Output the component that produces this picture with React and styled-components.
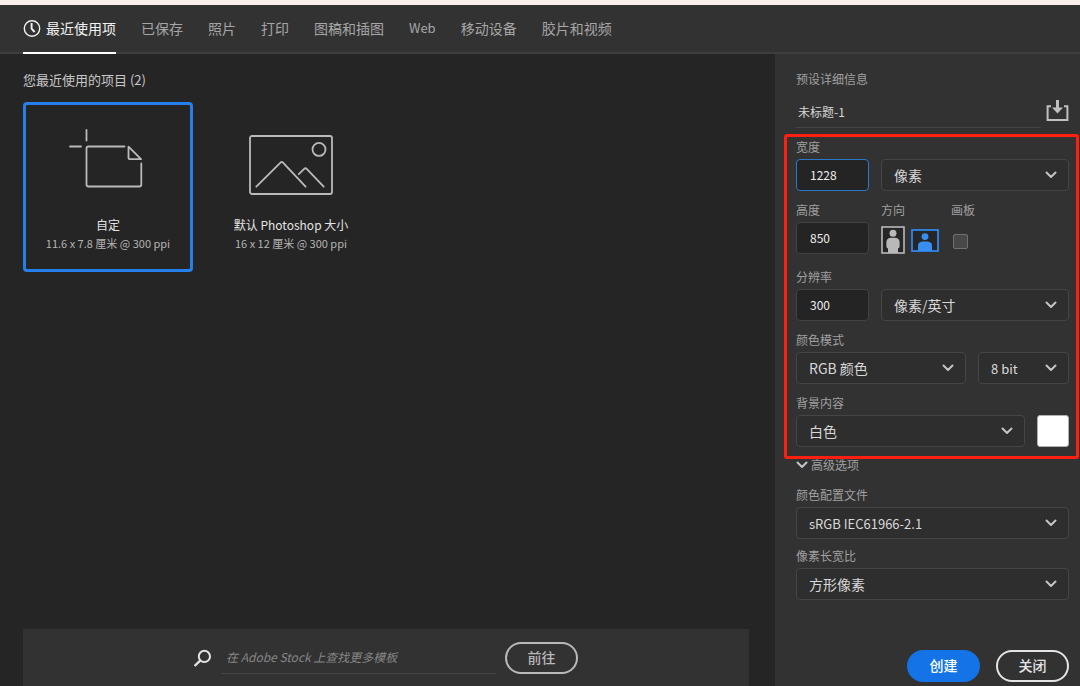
import React, { useState } from 'react'
import styled, { createGlobalStyle } from 'styled-components'

const tabs = ['最近使用项', '已保存', '照片', '打印', '图稿和插图', 'Web', '移动设备', '胶片和视频']

function Dropdown({ id, label, options, latin }) {
    return (
        <SelectWrap $latin={latin}>
            <select id={id} aria-label={label}>
                {options.map((option) => <option key={option}>{option}</option>)}
            </select>
            <Chevron />
        </SelectWrap>
    )
}

function Chevron() {
    return (
        <svg width="12" height="8" viewBox="0 0 12 8" fill="none" stroke="#c4c4c4" strokeWidth="2" strokeLinecap="round" strokeLinejoin="round" aria-hidden="true">
            <path d="M1.5 1.5L6 6L10.5 1.5" />
        </svg>
    )
}

function ClockIcon() {
    return (
        <svg width="18" height="18" viewBox="0 0 18 18" fill="none" stroke="#f0f0f0" aria-hidden="true">
            <circle cx="9" cy="9.5" r="7.7" strokeWidth="1.4" />
            <path d="M8.6 4V9.6L11.6 13" strokeWidth="1.9" />
        </svg>
    )
}

function DocumentArt() {
    return (
        <svg width="78" height="74" viewBox="0 0 78 74" fill="none" stroke="#bababa" strokeWidth="1.8" strokeLinecap="round" strokeLinejoin="round" aria-hidden="true">
            <path d="M17.5 2V12.5" />
            <path d="M1 18.5H12" />
            <path d="M55.5 18.5H19.5Q17.5 18.5 17.5 20.5V56.5Q17.5 58.5 19.5 58.5H70.3Q72.3 58.5 72.3 56.5V35.5" />
            <path d="M59.5 18.6V29.5Q59.5 31.2 61.2 31.2H72Z" />
        </svg>
    )
}

function ImageArt() {
    return (
        <svg width="84" height="60" viewBox="0 0 84 60" fill="none" stroke="#bababa" strokeWidth="1.8" strokeLinecap="round" strokeLinejoin="round" aria-hidden="true">
            <rect x="1" y="1" width="82" height="58" rx="2" />
            <circle cx="70" cy="14.4" r="6.5" />
            <path d="M7.3 51.7L31.5 27.6Q32.8 26.3 34 27.6L56.6 51.7" />
            <path d="M49.8 39.2L55.2 33.8Q56.5 32.6 57.7 33.8L74.7 51.7" />
        </svg>
    )
}

function SaveIcon() {
    return (
        <svg width="23" height="23" viewBox="0 0 23 23" fill="none" stroke="#c0c0c0" strokeWidth="2" aria-hidden="true">
            <path d="M5 7.2H1.6V21H21.4V7.2H18" />
            <path d="M11.5 1V10" strokeWidth="3" />
            <path d="M6 8.6H17L11.5 14.4Z" fill="#c0c0c0" stroke="none" />
        </svg>
    )
}

function PortraitIcon() {
    return (
        <svg width="24" height="28" viewBox="0 0 24 28" aria-hidden="true">
            <rect x="1" y="1" width="22" height="26" fill="#262626" stroke="#b9b9b9" strokeWidth="1.6" />
            <circle cx="12" cy="7.2" r="3.5" fill="#b9b9b9" />
            <path d="M9.5 11.8H14.5Q18.6 12.4 18.6 16.5V20.5Q18.6 22 17 22.4V27H7V22.4Q5.4 22 5.4 20.5V16.5Q5.4 12.4 9.5 11.8Z" fill="#b9b9b9" />
        </svg>
    )
}

function LandscapeIcon() {
    return (
        <svg width="28" height="23" viewBox="0 0 28 23" aria-hidden="true">
            <rect x="1" y="1" width="26" height="21" fill="#262626" stroke="#2f86ea" strokeWidth="1.8" />
            <circle cx="14" cy="7.6" r="3.4" fill="#378ef0" />
            <path d="M11.5 12.6H16.5Q21 13 21 16.5V22H7V16.5Q7 13 11.5 12.6Z" fill="#378ef0" />
        </svg>
    )
}

function SearchIcon() {
    return (
        <svg width="18" height="18" viewBox="0 0 18 18" fill="none" stroke="#e2e2e2" aria-hidden="true">
            <circle cx="10.4" cy="7.4" r="5.6" strokeWidth="2" />
            <path d="M6.4 11.4L0.6 17" strokeWidth="2.4" />
        </svg>
    )
}

function App() {
    const [activeTab, setActiveTab] = useState(tabs[0])
    const [orientation, setOrientation] = useState('landscape')

    return (
        <Page>
            <GlobalStyle />
            <Header>
                {tabs.map((tab) => (
                    <Tab key={tab} $active={tab === activeTab} $latin={tab === 'Web'} onClick={() => setActiveTab(tab)}>
                        {tab === tabs[0] && <ClockIcon />}
                        {tab}
                    </Tab>
                ))}
            </Header>
            <Body>
                <Main>
                    <Title>您最近使用的项目 (2)</Title>
                    <Presets>
                        <Preset $selected>
                            <Preview><DocumentArt /></Preview>
                            <PresetName>自定</PresetName>
                            <PresetSize>11.6 x 7.8 厘米 @ 300 ppi</PresetSize>
                        </Preset>
                        <Preset>
                            <Preview><ImageArt /></Preview>
                            <PresetName>默认 Photoshop 大小</PresetName>
                            <PresetSize>16 x 12 厘米 @ 300 ppi</PresetSize>
                        </Preset>
                    </Presets>
                    <StockBar>
                        <SearchIcon />
                        <StockInput aria-label="在 Adobe Stock 上查找更多模板" placeholder="在 Adobe Stock 上查找更多模板" />
                        <Button $tone="#b9b9b9">前往</Button>
                    </StockBar>
                </Main>

                <Aside>
                    <Label as="h2">预设详细信息</Label>
                    <NameRow>
                        <NameInput aria-label="名称" defaultValue="未标题-1" />
                        <IconButton aria-label="存储预设"><SaveIcon /></IconButton>
                    </NameRow>

                    <Highlight>
                        <Row $columns="73px 1fr">
                            <Field>
                                <Label htmlFor="width">宽度</Label>
                                <TextInput id="width" defaultValue="1228" $focused />
                            </Field>
                            <Field $end>
                                <Dropdown label="单位" options={['像素', '厘米', '英寸']} />
                            </Field>
                        </Row>
                        <Row $columns="73px 58px 1fr">
                            <Field>
                                <Label htmlFor="height">高度</Label>
                                <TextInput id="height" defaultValue="850" />
                            </Field>
                            <Field>
                                <Label as="span">方向</Label>
                                <Orientation>
                                    <IconButton aria-label="纵向" aria-pressed={orientation === 'portrait'} onClick={() => setOrientation('portrait')}>
                                        <PortraitIcon />
                                    </IconButton>
                                    <IconButton aria-label="横向" aria-pressed={orientation === 'landscape'} onClick={() => setOrientation('landscape')}>
                                        <LandscapeIcon />
                                    </IconButton>
                                </Orientation>
                            </Field>
                            <Field>
                                <Label htmlFor="artboard">画板</Label>
                                <Orientation>
                                    <Checkbox id="artboard" type="checkbox" />
                                </Orientation>
                            </Field>
                        </Row>
                        <Row $columns="73px 1fr">
                            <Field>
                                <Label htmlFor="resolution">分辨率</Label>
                                <TextInput id="resolution" defaultValue="300" />
                            </Field>
                            <Field $end>
                                <Dropdown label="分辨率单位" options={['像素/英寸', '像素/厘米']} />
                            </Field>
                        </Row>
                        <Row $columns="1fr 91px">
                            <Field>
                                <Label htmlFor="mode">颜色模式</Label>
                                <Dropdown id="mode" options={['RGB 颜色', 'CMYK 颜色', '灰度']} />
                            </Field>
                            <Field $end>
                                <Dropdown label="位深度" options={['8 bit', '16 bit', '32 bit']} latin />
                            </Field>
                        </Row>
                        <Row $columns="1fr 32px">
                            <Field>
                                <Label htmlFor="background">背景内容</Label>
                                <Dropdown id="background" options={['白色', '黑色', '透明']} />
                            </Field>
                            <Field $end>
                                <Swatch aria-label="背景颜色" />
                            </Field>
                        </Row>
                    </Highlight>

                    <Disclosure aria-expanded="true">
                        <Chevron />
                        高级选项
                    </Disclosure>
                    <Advanced>
                        <Field>
                            <Label htmlFor="profile">颜色配置文件</Label>
                            <Dropdown id="profile" options={['sRGB IEC61966-2.1', 'Adobe RGB (1998)']} latin />
                        </Field>
                        <Field>
                            <Label htmlFor="ratio">像素长宽比</Label>
                            <Dropdown id="ratio" options={['方形像素']} />
                        </Field>
                    </Advanced>

                    <Actions>
                        <Button $primary>创建</Button>
                        <Button $tone="#e4e4e4">关闭</Button>
                    </Actions>
                </Aside>
            </Body>
        </Page>
    )
}

const GlobalStyle = createGlobalStyle`
*{
    box-sizing:border-box;
}
body{
    margin:0;
    background:#252525;
}
body,button,input,select{
    font-family:"Noto Sans CJK SC","Noto Sans",sans-serif;
}
h1,h2,p{
    margin:0;
}
svg{
    display:block;
    flex-shrink:0;
}
`

const Page = styled.div`
display:flex;
flex-direction:column;
min-height:100vh;
border-top:5px solid #faf0eb;
color:#d6d6d6;
`

const Header = styled.nav`
display:flex;
gap:25px;
height:49px;
padding:0 23px;
background:#323232;
box-shadow:inset 0 -2px #3e3e3e;
`

const Tab = styled.button`
display:flex;
align-items:center;
gap:5px;
padding:0 0 2px;
border:0;
border-bottom:2px solid ${(props) => (props.$active ? '#ffffff' : 'transparent')};
background:none;
color:${(props) => (props.$active ? '#f2f2f2' : '#a6a6a6')};
font-size:${(props) => (props.$latin ? '13px' : '14px')};
white-space:nowrap;
`

const Body = styled.div`
display:grid;
grid-template-columns:1fr 305px;
flex:1;
`

const Main = styled.main`
display:flex;
flex-direction:column;
padding:16px 26px 0 23px;
background:#252525;
`

const Title = styled.h1`
color:#c8c8c8;
font-size:13px;
font-weight:400;
line-height:20px;
`

const Presets = styled.div`
display:flex;
gap:13px;
margin:12px 0 auto;
`

const Preset = styled.button`
display:flex;
flex-direction:column;
align-items:center;
width:170px;
height:170px;
padding:23px 0 0;
border:3px solid ${(props) => (props.$selected ? '#2680eb' : 'transparent')};
border-radius:4px;
background:none;
`

const Preview = styled.span`
display:flex;
align-items:center;
height:74px;
margin-bottom:13px;
`

const PresetName = styled.span`
color:#e4e4e4;
font-size:12px;
line-height:19px;
`

const PresetSize = styled.span`
color:#b4b4b4;
font-size:11px;
line-height:19px;
`

const StockBar = styled.form`
display:flex;
align-items:center;
justify-content:center;
gap:9px;
height:57px;
background:#323232;
`

const StockInput = styled.input`
width:275px;
height:32px;
padding:0 5px 2px;
border:0;
border-bottom:1px solid #444444;
background:none;
color:#d6d6d6;
font-size:12px;
font-style:italic;
outline:none;
&::placeholder{
    color:#858585;
    opacity:1;
}
`

const Button = styled.button.attrs({ type: 'button' })`
width:73px;
height:32px;
padding:0 0 2px;
border:2px solid ${(props) => (props.$primary ? '#1473e6' : props.$tone)};
border-radius:16px;
background:${(props) => (props.$primary ? '#1473e6' : 'transparent')};
color:${(props) => (props.$primary ? '#ffffff' : props.$tone)};
font-size:14px;
font-weight:500;
line-height:20px;
`

const Aside = styled.aside`
display:flex;
flex-direction:column;
padding:17px 11px 4px 21px;
background:#323232;
`

const Label = styled.label`
color:#a0a0a0;
font-size:12px;
font-weight:400;
line-height:16px;
white-space:nowrap;
`

const NameRow = styled.div`
display:flex;
align-items:flex-start;
gap:5px;
margin:12px 0 6px;
`

const NameInput = styled.input`
flex:1;
min-width:0;
height:29px;
padding:0 2px 4px;
border:0;
border-bottom:1px solid #454545;
background:none;
color:#d6d6d6;
font-size:12px;
outline:none;
`

const IconButton = styled.button`
padding:0;
border:0;
background:none;
`

const Highlight = styled.section`
display:flex;
flex-direction:column;
gap:11px;
margin:0 -10px 0 -12px;
padding:2px 7px 9px 9px;
border:3px solid #ff1e12;
border-radius:3px;
`

const Row = styled.div`
display:grid;
grid-template-columns:${(props) => props.$columns};
gap:12px;
`

const Field = styled.div`
display:flex;
flex-direction:column;
justify-content:${(props) => (props.$end ? 'flex-end' : 'flex-start')};
gap:4px;
min-width:0;
`

const TextInput = styled.input`
width:100%;
height:32px;
padding:0 13px 2px;
border:1px solid ${(props) => (props.$focused ? '#2c76cc' : '#424242')};
border-radius:4px;
background:#242424;
color:#eeeeee;
font-size:12px;
outline:none;
`

const SelectWrap = styled.div`
display:grid;
align-items:center;
select{
    grid-area:1 / 1;
    width:100%;
    height:32px;
    padding:0 12px;
    border:1px solid #454545;
    border-radius:4px;
    appearance:none;
    background:#2e2e2e;
    color:#d8d8d8;
    font-size:${(props) => (props.$latin ? '13px' : '14px')};
    outline:none;
}
svg{
    grid-area:1 / 1;
    justify-self:end;
    margin-right:12px;
    pointer-events:none;
}
`

const Orientation = styled.div`
display:flex;
align-items:center;
gap:6px;
height:36px;
`

const Checkbox = styled.input`
width:15px;
height:15px;
margin:2px 2px 0;
border:1px solid #707070;
border-radius:2px;
appearance:none;
background:#484848;
`

const Swatch = styled.button`
width:32px;
height:32px;
padding:0;
border:1px solid #b0b0b0;
border-radius:3px;
background:#ffffff;
`

const Disclosure = styled.button`
display:flex;
align-items:center;
gap:3px;
align-self:flex-start;
padding:0;
border:0;
background:none;
color:#a0a0a0;
font-size:12px;
line-height:12px;
`

const Advanced = styled.div`
display:flex;
flex-direction:column;
gap:9px;
margin-top:16px;
`

const Actions = styled.div`
display:flex;
justify-content:flex-end;
gap:16px;
margin-top:auto;
padding-top:16px;
`

export default App
